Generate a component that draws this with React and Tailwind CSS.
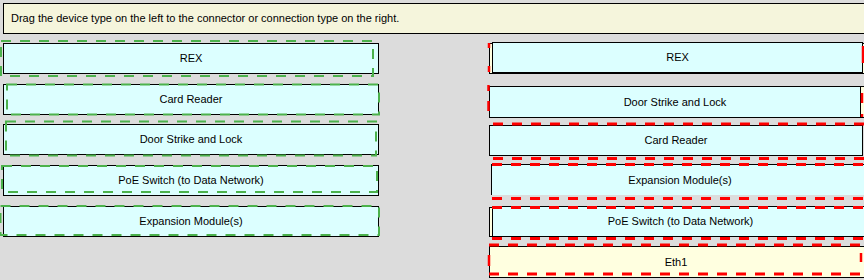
import React from "react";

const cyan = "bg-[#dcffff]";
const beige = "bg-[#ffffe0]";

function LeftBox({ label, mt }) {
  return (
    <div className={`${mt} w-[376px] h-[31px] border border-black ${cyan} flex items-center justify-center text-[11px] text-black`}>
      {label}
    </div>
  );
}

const green = [
  [1, 41, 373, 76],
  [7, 84.5, 379, 114.5],
  [6, 121.5, 376, 155.5],
  [2, 166, 377, 192],
  [0.5, 206, 379, 235],
];

const redDashed = [
  [493, 124, 866, 124],
  [493, 158.5, 866, 158.5],
  [492, 164.5, 866, 164.5],
  [492, 198.5, 866, 198.5],
  [492, 207.5, 866, 207.5],
  [492, 238.5, 866, 238.5],
  [489, 245, 866, 245],
  [489, 274, 866, 274],
];

const redSolid = [
  [489, 43, 489, 48],
  [489, 66, 489, 72],
  [863, 46, 863, 63],
  [488.5, 85, 488.5, 91],
  [488.5, 101, 488.5, 111],
  [862, 93, 862, 103],
  [862, 114, 862, 117],
  [489, 255, 489, 266],
  [861, 253, 861, 262],
];

export default function App() {
  return (
    <div className="relative w-[864px] h-[280px] overflow-hidden bg-[#dcdcdc] font-['Liberation_Sans',Arial,sans-serif] text-black">
      <div className="ml-[3px] mt-[3px] h-[31px] border border-r-0 border-black bg-[#f5f5dc] flex items-center pl-[7px] text-[11px]">
        Drag the device type on the left to the connector or connection type on the right.
      </div>
      <div className="flex items-start">
        <div className="ml-[3px] mt-[9px] flex flex-col">
          <LeftBox label="REX" mt="mt-0" />
          <LeftBox label="Card Reader" mt="mt-[10px]" />
          <LeftBox label="Door Strike and Lock" mt="mt-[9px]" />
          <LeftBox label="PoE Switch (to Data Network)" mt="mt-[10px]" />
          <LeftBox label="Expansion Module(s)" mt="mt-[10px]" />
        </div>
        <div className="ml-[110px] mt-[8px] flex flex-col w-[380px] shrink-0">
          <div className="relative h-[32px]">
            <div className={`absolute left-0 top-[1px] w-[380px] h-[31px] border border-black ${beige}`} />
            <div className={`relative ml-[3px] w-[371px] h-[31px] border border-black ${cyan} flex items-center justify-center text-[11px]`}>REX</div>
          </div>
          <div className="relative mt-[12px] h-[32px]">
            <div className={`absolute left-0 top-0 w-[380px] h-[32px] border border-black ${beige}`} />
            <div className={`relative w-[372px] h-[32px] border border-black ${cyan} flex items-center justify-center text-[11px]`}>Door Strike and Lock</div>
          </div>
          <div className="relative mt-[7px] h-[31px]">
            <div className={`relative w-[374px] h-[31px] border border-black ${cyan} flex items-center justify-center text-[11px]`}>Card Reader</div>
          </div>
          <div className="relative mt-[8px] h-[31px]">
            <div className={`relative ml-[2px] w-[378px] h-[31px] border border-b-0 border-black ${cyan} flex items-center justify-center text-[11px]`}>Expansion Module(s)</div>
          </div>
          <div className="relative mt-[11px] h-[31px]">
            <div className={`absolute left-0 top-[1px] w-[380px] h-[30px] border border-black ${beige}`} />
            <div className={`relative ml-[3px] w-[377px] h-[31px] border border-black ${cyan} flex items-center justify-center text-[11px]`}>PoE Switch (to Data Network)</div>
          </div>
          <div className="relative mt-[9px] h-[32px]">
            <div className={`relative w-[380px] h-[32px] border border-black ${beige} flex items-center justify-center text-[11px] pr-[6px]`}>Eth1</div>
          </div>
        </div>
      </div>
      <svg className="absolute left-0 top-0 pointer-events-none" width="864" height="280">
        {green.map(([x0, y0, x1, y1], i) => (
          <rect key={i} x={x0} y={y0} width={x1 - x0} height={y1 - y0} fill="none" stroke="#4cb24c" strokeWidth="2" strokeDasharray="10 9" />
        ))}
        {redDashed.map(([x0, y0, x1, y1], i) => (
          <line key={"d" + i} x1={x0} y1={y0} x2={x1} y2={y1} stroke="#ff0000" strokeWidth="3" strokeDasharray="10 9" />
        ))}
        {redSolid.map(([x0, y0, x1, y1], i) => (
          <line key={"s" + i} x1={x0} y1={y0} x2={x1} y2={y1} stroke="#ff0000" strokeWidth="2.5" />
        ))}
      </svg>
    </div>
  );
}
